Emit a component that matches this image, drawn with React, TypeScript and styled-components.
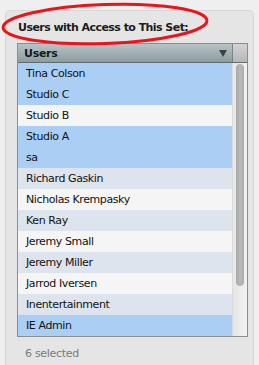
import React from "react";
import styled, { createGlobalStyle } from "styled-components";

const GlobalStyle = createGlobalStyle`
  html, body {
    margin: 0;
    padding: 0;
    background: #efefef;
  }
  body {
    font-family: "DejaVu Sans", "Liberation Sans", sans-serif;
    -webkit-font-smoothing: antialiased;
  }
`;

type User = { name: string; selected: boolean };

const users: User[] = [
  { name: "Tina Colson", selected: true },
  { name: "Studio C", selected: true },
  { name: "Studio B", selected: false },
  { name: "Studio A", selected: true },
  { name: "sa", selected: true },
  { name: "Richard Gaskin", selected: false },
  { name: "Nicholas Krempasky", selected: false },
  { name: "Ken Ray", selected: false },
  { name: "Jeremy Small", selected: false },
  { name: "Jeremy Miller", selected: false },
  { name: "Jarrod Iversen", selected: false },
  { name: "Inentertainment", selected: false },
  { name: "IE Admin", selected: true },
];

const Page = styled.div`
  position: relative;
  height: 365px;
  overflow: hidden;
  padding: 10px 5px 0 5px;
  box-sizing: border-box;
`;

const Panel = styled.div`
  background: #e5e5e5;
  border: 1px solid #d6d6d6;
  border-bottom: none;
  border-radius: 5px 5px 0 0;
  height: 400px;
  padding: 10px 5px 0 11px;
`;

const Title = styled.div`
  font-size: 11px;
  font-weight: bold;
  letter-spacing: -0.55px;
  color: #1c1c1c;
  line-height: 13px;
  padding-left: 1px;
  margin-bottom: 9px;
`;

const ListBox = styled.div`
  border: 1px solid #8d8d8d;
  background: #f5f5f5;
`;

const Header = styled.div`
  display: flex;
  height: 18px;
  border-bottom: 1px solid #5f6d70;
`;

const HeaderCell = styled.div`
  flex: 1;
  display: flex;
  align-items: center;
  justify-content: space-between;
  padding: 0 6px;
  background: linear-gradient(#b9c3c6, #8c9c9f);
  font-size: 11px;
  font-weight: bold;
  letter-spacing: -0.3px;
  color: #151a1b;
  border-right: 1px solid #7a8486;
`;

const Arrow = styled.span`
  width: 0;
  height: 0;
  border-left: 4px solid transparent;
  border-right: 4px solid transparent;
  border-top: 7px solid #3b4345;
  margin-right: -1px;
`;

const HeaderCorner = styled.div`
  width: 14px;
  background: linear-gradient(#d4d4d4, #b7b7b7);
`;

const Body = styled.div`
  display: flex;
  height: 273px;
  overflow: hidden;
`;

const Rows = styled.div`
  flex: 1;
`;

const Row = styled.div<{ $selected: boolean; $alt: boolean }>`
  height: 21px;
  line-height: 21px;
  padding-left: 8px;
  font-size: 11px;
  letter-spacing: -0.4px;
  color: #111;
  white-space: nowrap;
  background: ${(p) =>
    p.$selected ? "#abcef5" : p.$alt ? "#dee4ed" : "#f5f5f5"};
`;

const Track = styled.div`
  width: 14px;
  border-left: 1px solid #dcdcdc;
  background: linear-gradient(90deg, #e6e6e6, #f2f2f2);
  padding-top: 1px;
  display: flex;
  justify-content: center;
`;

const Thumb = styled.div`
  width: 8px;
  height: 222px;
  border-radius: 4px;
  background: linear-gradient(90deg, #a9a9a9, #b9b9b9 50%, #aeaeae);
`;

const Footer = styled.div`
  font-size: 11px;
  letter-spacing: -0.3px;
  color: #7a7a7a;
  padding: 10px 0 0 8px;
`;

const Ring = styled.svg`
  position: absolute;
  left: 0;
  top: 0;
  pointer-events: none;
`;

export default function App() {
  return (
    <>
      <GlobalStyle />
      <Page>
        <Panel>
          <Title>Users with Access to This Set:</Title>
          <ListBox>
            <Header>
              <HeaderCell>
                Users
                <Arrow />
              </HeaderCell>
              <HeaderCorner />
            </Header>
            <Body>
              <Rows>
                {users.map((u, i) => (
                  <Row key={u.name} $selected={u.selected} $alt={i % 2 === 1}>
                    {u.name}
                  </Row>
                ))}
              </Rows>
              <Track>
                <Thumb />
              </Track>
            </Body>
          </ListBox>
          <Footer>6 selected</Footer>
        </Panel>
        <Ring width="259" height="60" viewBox="0 0 259 60">
          <ellipse
            cx="105"
            cy="24"
            rx="102"
            ry="19.5"
            fill="none"
            stroke="#e8161c"
            strokeWidth="3"
            transform="rotate(-2 105 24)"
          />
        </Ring>
      </Page>
    </>
  );
}
